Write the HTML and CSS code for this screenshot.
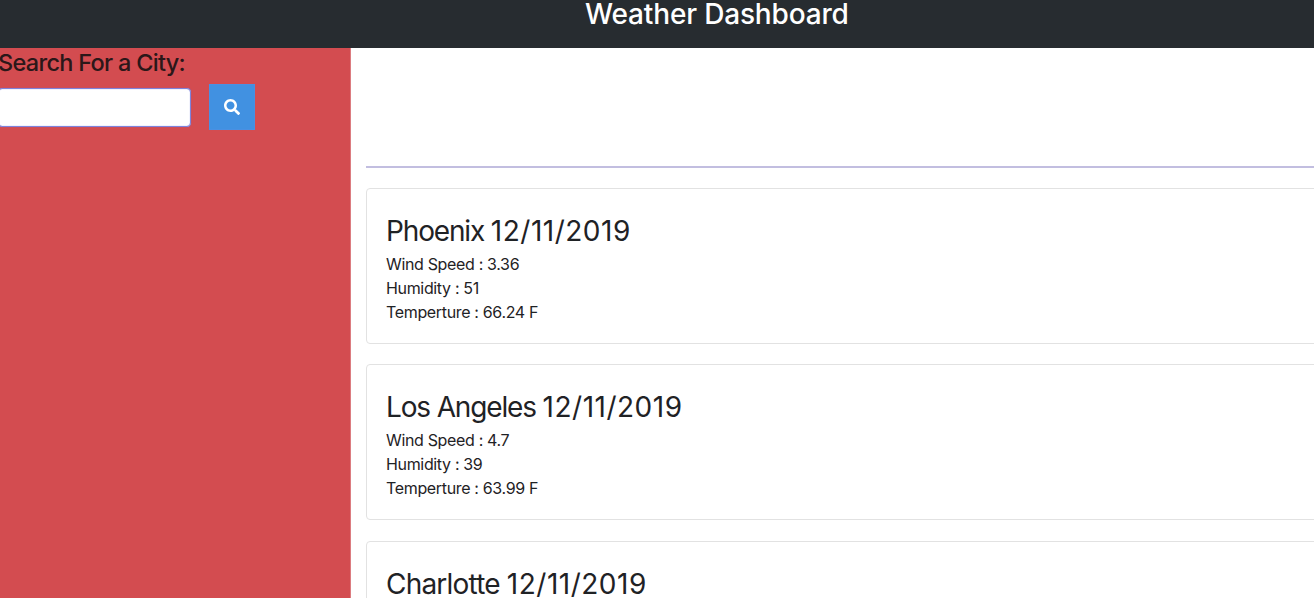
FILE: index.html
```html
<!DOCTYPE html>
<html lang="en">
<head>
<meta charset="utf-8">
<title>Weather Dashboard</title>
<link rel="stylesheet" href="styles.css">
</head>
<body>
<header class="header"><h1 class="title">Weather Dashboard</h1></header>
<div class="layout">
  <aside class="sidebar">
    <h2 class="label">Search For a City:</h2>
    <div class="search">
      <input class="field" type="text" aria-label="City">
      <button class="button" type="button" aria-label="Search">
        <svg class="icon" viewBox="0 0 512 512"><path fill="#fff" d="M505 442.700 405.300 343c-4.500-4.500-10.600-7-17-7H372c27.600-35.300 44-79.700 44-128C416 93.100 322.900 0 208 0S0 93.100 0 208s93.100 208 208 208c48.300 0 92.700-16.400 128-44v16.300c0 6.400 2.500 12.500 7 17l99.700 99.700c9.400 9.400 24.600 9.400 33.900 0l28.300-28.300c9.400-9.400 9.400-24.600.1-34zM208 336c-70.700 0-128-57.200-128-128 0-70.700 57.200-128 128-128 70.700 0 128 57.200 128 128 0 70.700-57.200 128-128 128z"/></svg>
      </button>
    </div>
  </aside>
  <main class="main">
    <section class="current"></section>
    <article class="card"><h2 class="city">Phoenix <span class="date">12/11/2019</span></h2><p class="row">Wind Speed : 3.36</p><p class="row">Humidity : 51</p><p class="row">Temperture : 66.24 F</p></article>
    <article class="card"><h2 class="city">Los Angeles <span class="date">12/11/2019</span></h2><p class="row">Wind Speed : 4.7</p><p class="row">Humidity : 39</p><p class="row">Temperture : 63.99 F</p></article>
    <article class="card"><h2 class="city wide">Charlotte <span class="date">12/11/2019</span></h2></article>
  </main>
</div>
</body>
</html>
```
FILE: styles.css
```css
* { box-sizing: border-box; }
body { margin: 0; height: 598px; overflow: hidden; background: #fff; color: #1f2225; font-family: Inter, "Liberation Sans", sans-serif; }
h1, h2, p { margin: 0; font-weight: 500; white-space: nowrap; }
.header { height: 48px; background: #272c30; color: #fff; padding-left: 585px; }
.title { font-size: 28px; line-height: 28px; letter-spacing: -0.160px; }
.layout { display: flex; height: 550px; }
.sidebar { flex: 0 0 351px; background: #d34c50; border-right: 1px solid #dc7c80; }
.label { color: #2b1719; font-size: 23.5px; line-height: 30px; letter-spacing: -0.700px; margin-left: -2px; }
.search { display: flex; align-items: center; gap: 18px; margin-top: 6px; }
.field { width: 193px; height: 39px; margin-left: -2px; border: 1px solid #7e83dc; border-radius: 4px; background: #fff; box-shadow: inset 0 0 1px #7e83dc, 0 0 1px #8b6bb0; outline: none; }
.button { width: 46px; height: 46px; padding: 0; border: 1px solid #4a90e2; background: #4191e1; display: flex; align-items: center; justify-content: center; }
.icon { width: 16px; height: 16px; }
.main { flex: 1; min-width: 0; padding-left: 15px; overflow: hidden; }
.current { height: 120px; border-bottom: 2px solid #c2bee0; margin-bottom: 20px; }
.card { width: 1000px; height: 156px; margin-bottom: 20px; padding: 24px 19px; border: 1px solid #e2e2e2; border-radius: 4px; }
.card:nth-of-type(2) { margin-bottom: 21px; }
.city { font-size: 28px; line-height: 36px; font-weight: 400; letter-spacing: -1.150px; margin-bottom: 3px; }
.wide { letter-spacing: -0.800px; }
.date { letter-spacing: 0.500px; }
.row { font-size: 16px; line-height: 24px; font-weight: 400; letter-spacing: -0.340px; }
```
